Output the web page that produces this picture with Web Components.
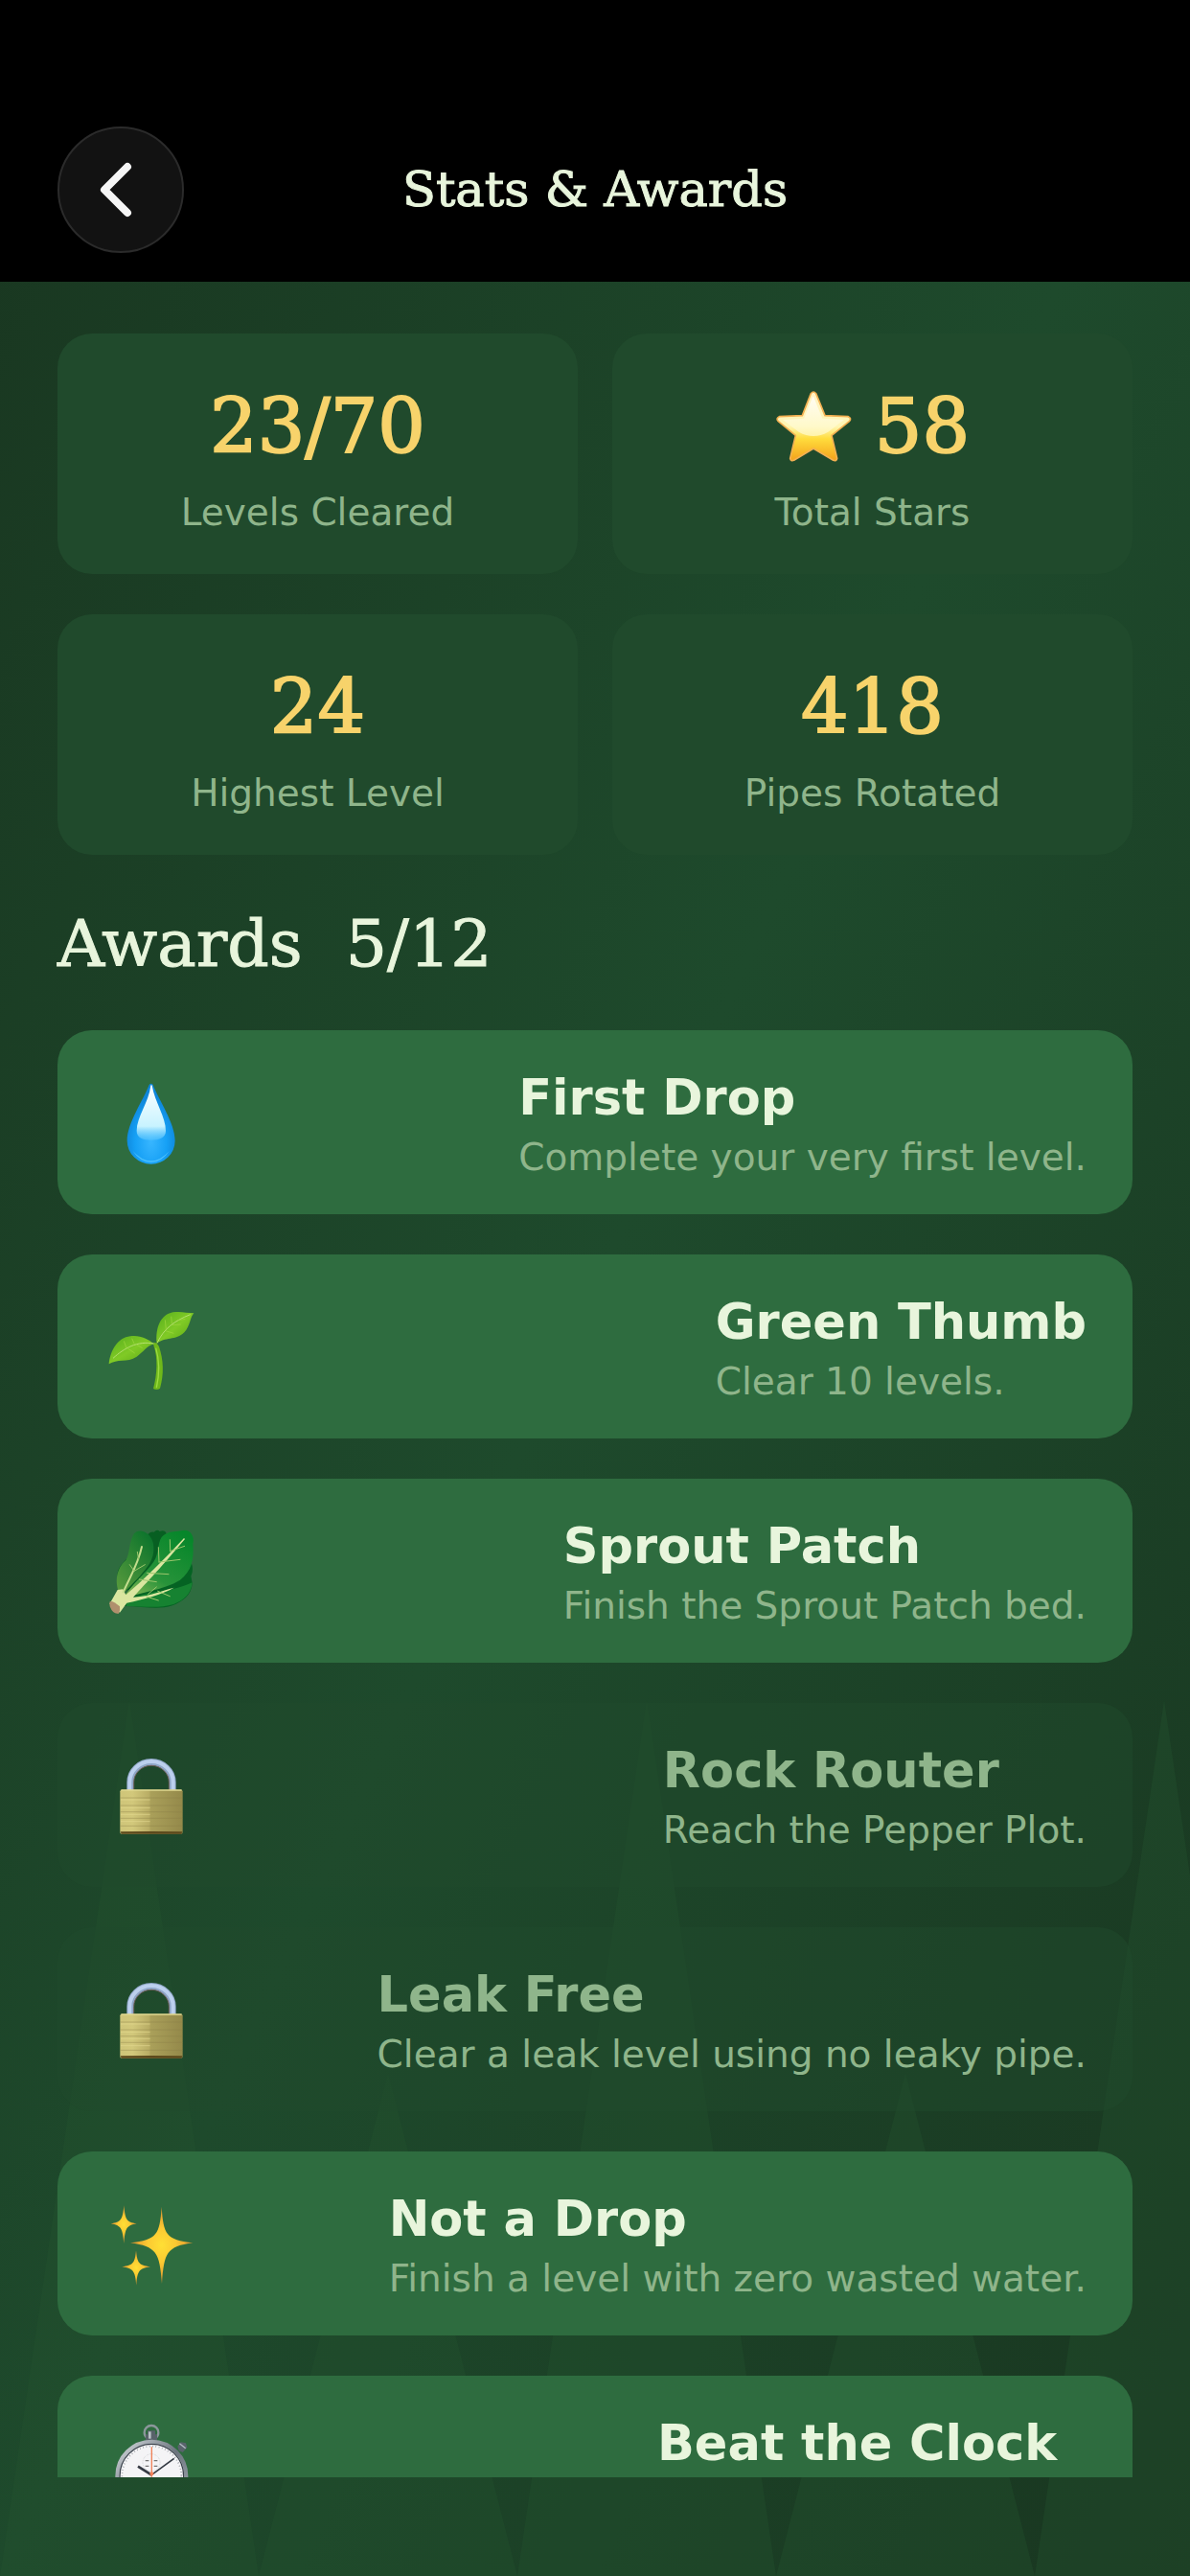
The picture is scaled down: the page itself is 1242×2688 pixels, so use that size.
<!DOCTYPE html>
<html lang="en">
<head>
<meta charset="utf-8">
<meta name="viewport" content="width=device-width, initial-scale=1">
<title>Stats &amp; Awards</title>
<style>
html, body {
    margin: 0;
    background: #000000;
}
body {
    --cream: #e8f5dc;
    --muted: #8fb58b;
    --gold: #f7d36b;
    --leaf: #2e6c3f;
    --moss: #204a2c;
    --serif: "DejaVu Serif", serif;
    font-family: "DejaVu Sans", Verdana, sans-serif;
    color: var(--cream);
}
.timed {
    --text-width: 448px;
}
</style>
</head>
<body>
<stats-screen>
    <top-bar slot="header">Stats &amp; Awards</top-bar>
    <stat-grid>
        <stat-card label="Levels Cleared">23/70</stat-card>
        <stat-card label="Total Stars"><game-icon slot="icon" name="star"></game-icon>58</stat-card>
        <stat-card label="Highest Level">24</stat-card>
        <stat-card label="Pipes Rotated">418</stat-card>
    </stat-grid>
    <award-list heading="Awards" count="5/12">
        <award-row icon="drop">First Drop<span slot="detail">Complete your very first level.</span></award-row>
        <award-row icon="seedling">Green Thumb<span slot="detail">Clear 10 levels.</span></award-row>
        <award-row icon="greens">Sprout Patch<span slot="detail">Finish the Sprout Patch bed.</span></award-row>
        <award-row icon="lock" locked>Rock Router<span slot="detail">Reach the Pepper Plot.</span></award-row>
        <award-row icon="lock" locked>Leak Free<span slot="detail">Clear a leak level using no leaky pipe.</span></award-row>
        <award-row icon="sparkles">Not a Drop<span slot="detail">Finish a level with zero wasted water.</span></award-row>
        <award-row icon="stopwatch" class="timed">Beat the Clock</award-row>
    </award-list>
</stats-screen>

<script>
const icons = {
    star: `<svg viewBox="68 46 240 228" width="80" height="76">
        <defs>
            <linearGradient id="s" x1="0" y1="0" x2="0" y2="1">
                <stop offset="0" stop-color="#fff3c4"/><stop offset=".5" stop-color="#fff6b4"/>
                <stop offset=".68" stop-color="#ffdc3c"/><stop offset="1" stop-color="#f4a21c"/>
            </linearGradient>
            <linearGradient id="g" x1="0" y1="0" x2="0" y2="1">
                <stop offset="0" stop-color="#ffffff"/><stop offset="1" stop-color="#fff8c0"/>
            </linearGradient>
        </defs>
        <path d="M180 57q8-10 16 0l28 69 73 3q11 5 4 14l-56 45 17 72q-2 10-12 6l-62-37-61 37q-10 4-12-6l17-72-55-45q-7-9 4-14l72-3z" fill="url(#s)" stroke="#f3b052" stroke-width="5" stroke-linejoin="round"/>
        <path d="M186 66l2 0 28 69 68 4-50 38q-46 26-92 0l-50-38 66-4z" fill="url(#g)" opacity=".8"/>
    </svg>`,
    drop: `<svg viewBox="0 3 420 360" width="140" height="120">
        <defs>
            <radialGradient id="d" cx=".5" cy=".72" r=".55">
                <stop offset="0" stop-color="#38b6ff"/><stop offset=".6" stop-color="#16a0f5"/>
                <stop offset="1" stop-color="#0e86da"/>
            </radialGradient>
            <linearGradient id="h" x1="0" y1="0" x2="0" y2="1">
                <stop offset="0" stop-color="#ffffff"/><stop offset=".75" stop-color="#c8f3ff"/>
                <stop offset="1" stop-color="#5cc8ff" stop-opacity=".5"/>
            </linearGradient>
        </defs>
        <path d="M197 66q6-7 12 0c18 48 69 119 69 175a75 73 0 0 1-150 0c0-56 51-127 69-175z" fill="url(#d)"/>
        <path d="M202 68c-6 52-44 98-44 142 0 22 18 29 45 29s46-7 46-29c0-44-34-90-43-142q-2-4-4 0z" fill="url(#h)"/>
        <path d="M145 272q58 64 116 0-24 36-58 36t-58-36z" fill="#62cfff" opacity=".7"/>
    </svg>`,
    seedling: `<svg viewBox="0 15 420 360" width="140" height="120">
        <defs>
            <linearGradient id="l" x1="0" y1="0" x2="1" y2="1">
                <stop offset="0" stop-color="#55ad1c"/><stop offset=".5" stop-color="#80ca26"/>
                <stop offset="1" stop-color="#58a512"/>
            </linearGradient>
        </defs>
        <path d="M212 182q12 2 16 14c14 42 16 86 3 130q-10 8-21 1c12-46 15-96 1-136z" fill="#6fb81a"/>
        <path d="M218 200c13 44 11 84 2 124" fill="none" stroke="#9bdc40" stroke-width="4"/>
        <path d="M71 250c4-42 28-83 67-87 32-4 54 9 75 24-25 7-32 24-55 40-30 20-62 5-87 23z" fill="url(#l)"/>
        <path d="M221 186c-5-49 11-90 50-98 25-4 44 2 66 3-12 12-11 40-30 60-26 27-62 13-86 35z" fill="url(#l)"/>
        <path d="M84 232c35-32 75-55 128-46M222 184c22-46 54-69 104-89" fill="none" stroke="#b5e070" stroke-width="3"/>
        <path d="M126 200l-8-22M151 188l-8-18M130 201l22 15M158 190l18 10M250 142l-3-30M268 123l-2-22M248 146l26 8M268 128l28-2M288 113l22-4" fill="none" stroke="#a0d840" stroke-width="2"/>
    </svg>`,
    greens: `<svg viewBox="0 27 420 360" width="140" height="120">
        <defs>
            <linearGradient id="v" x1=".8" y1="0" x2=".1" y2="1">
                <stop offset="0" stop-color="#06862a"/><stop offset=".6" stop-color="#28933a"/>
                <stop offset="1" stop-color="#8fba57"/>
            </linearGradient>
            <linearGradient id="w" x1=".8" y1="0" x2=".1" y2="1">
                <stop offset="0" stop-color="#0c742c"/><stop offset="1" stop-color="#5a9b3d"/>
            </linearGradient>
        </defs>
        <path d="M190 98q8-14 22-12 10-10 18-2 14-6 20 4l4 34-30 80-70 60-44 10q-26-52 0-84l28-32z" fill="#075f22"/>
        <path d="M110 290c60-50 150-30 218-110q10 22 0 44l4 22c-2 38-32 58-62 70-50 16-96 0-160 2z" fill="#056323"/>
        <path d="M108 290c-22-46-14-90 16-116 14-24 8-54 26-84 22-20 54 2 60 32 6 40-10 64-34 92-22 28-50 50-68 76z" fill="url(#w)"/>
        <path d="M110 300c34-52 78-86 102-122 16-24 10-54 24-76 18-22 46-16 70-22 22-2 34 22 28 44 4 48-4 84-40 112-54 34-118 32-184 64z" fill="url(#v)"/>
        <path d="M126 306c54-40 130-26 206-62-4 38-28 56-58 68-46 14-92 6-148 6z" fill="#168231"/>
        <path d="M73 311l25-44 17-2 9 18q84-72 182-178l3 3c-70 84-118 134-162 182 62-4 96-24 128-30-40 22-92 36-148 48l-22 30z" fill="#dbe6a0"/>
        <path d="M116 274c22-50 46-86 58-142" fill="none" stroke="#c3dc8c" stroke-width="6" stroke-linecap="round"/>
        <path d="M150 208l-14-20M164 172l-4-24M150 208l34-20M228 180l-2-46M263 146l-1-36M228 180l66-8M262 146l46-16M190 214l68 4M166 234l54 8M194 280l26-22M224 271l38 16M188 288l38 12" fill="none" stroke="#9cc66c" stroke-width="3" stroke-linecap="round"/>
        <path d="M73 305q6-8 32 14 2 14-3 22-18 4-28-22z" fill="#b08f6d"/>
    </svg>`,
    lock: `<svg viewBox="0 9 420 360" width="140" height="120">
        <defs>
            <linearGradient id="b">
                <stop offset="0" stop-color="#cfc579"/><stop offset=".2" stop-color="#d2c87b"/>
                <stop offset=".46" stop-color="#b9ad65"/><stop offset=".49" stop-color="#aaa05a"/>
                <stop offset="1" stop-color="#94894a"/>
            </linearGradient>
        </defs>
        <path d="M138 176v-27a66 63 0 0 1 132 0v27" fill="none" stroke="#8fa6c6" stroke-width="22"/>
        <path d="M136 176v-27a68 65 0 0 1 136 0v27" fill="none" stroke="#bcd0ee" stroke-width="12"/>
        <path d="M149 174v-25a55 52 0 0 1 110 0v25" fill="none" stroke="#6e5f58" stroke-width="3"/>
        <rect x="106" y="173" width="196" height="138" rx="5" fill="url(#b)"/>
        <path d="M109 174h190" stroke="#e0d890" stroke-width="4"/>
        <path d="M107 198h194M107 222h194M107 242h194M107 262h194M107 286h194" stroke="#8d8148" stroke-width="2" opacity=".6"/>
        <path d="M108 204h92M108 229h92M108 250h92M108 272h92" stroke="#e4da91" stroke-width="3" opacity=".6"/>
        <path d="M107 304q98-2 194 0l-3 7h-188z" fill="#5c491c"/>
    </svg>`,
    sparkles: `<svg viewBox="0 3 420 360" width="140" height="120">
        <defs>
            <radialGradient id="k">
                <stop offset="0" stop-color="#ffdf35"/><stop offset=".45" stop-color="#fbc932"/>
                <stop offset="1" stop-color="#d98e2f"/>
            </radialGradient>
        </defs>
        <g fill="url(#k)">
            <path d="M236 68c6 88 14 103 98 113-82 12-90 30-97 128-7-98-17-116-99-128 83-10 92-25 98-113z"/>
            <path d="M118 64c4 45 8 52 40 57-32 6-36 14-40 62-4-48-9-56-41-62 32-5 37-12 41-57z"/>
            <path d="M156 205c4 40 8 46 45 51-36 6-41 13-44 58-4-45-9-52-45-58 36-5 40-11 44-51z"/>
        </g>
    </svg>`,
    stopwatch: `<svg viewBox="0 45 420 360" width="140" height="120">
        <defs>
            <linearGradient id="m" x1="0" y1="0" x2="1" y2="1">
                <stop offset="0" stop-color="#d8dde2"/><stop offset=".5" stop-color="#6a737c"/>
                <stop offset="1" stop-color="#aab2ba"/>
            </linearGradient>
        </defs>
        <circle cx="204" cy="115" r="22" fill="none" stroke="#8b979b" stroke-width="7"/>
        <path d="M192 109h24v12h6v20h-36v-20h6z" fill="#58626a"/>
        <path d="M195 112h8v22h-8z" fill="#b9c2c6"/>
        <path d="M286 158l10-13 16 3 4 14-14 15-12-5z" fill="#59636c"/>
        <path d="M292 149l19 15" stroke="#b2bcc3" stroke-width="4"/>
        <circle cx="205" cy="251" r="108" fill="#f4f4f6" stroke="url(#m)" stroke-width="12"/>
        <circle cx="205" cy="251" r="100" fill="none" stroke="#39414b" stroke-width="4"/>
        <circle cx="205" cy="251" r="93" fill="none" stroke="#8a8f96" stroke-width="5" stroke-dasharray="2 8"/>
        <circle cx="204" cy="209" r="27" fill="none" stroke="#b7babd" stroke-width="2" stroke-dasharray="2 3"/>
        <path d="M185 203h11M212 203h11M185 220h11M212 220h11" stroke="#777777" stroke-width="4"/>
        <path d="M162 221l43 27" stroke="#343a43" stroke-width="8"/>
        <path d="M205 247l70-51" stroke="#343a43" stroke-width="5"/>
        <path d="M205 160v94" stroke="#ef8159" stroke-width="4"/>
        <circle cx="205" cy="244" r="6" fill="#ef8159"/>
    </svg>`
};

class BaseElement extends HTMLElement {
    constructor() {
        super();
        this.attachShadow({mode: "open"});
    }
    connectedCallback() {
        let t = document.createElement("template");
        t.innerHTML = this.template();
        this.shadowRoot.replaceChildren(t.content.cloneNode(true));
    }
}

class GameIcon extends BaseElement {
    template() {
        return `
<style>
:host { display: block; flex: none; }
svg { display: block; }
</style>
${icons[this.getAttribute("name")]}`;
    }
}
customElements.define("game-icon", GameIcon);

// gradient with a row of hedge spikes standing on the bottom edge
class GardenBackdrop extends BaseElement {
    template() {
        return `
<style>
:host {
    display: flex;
    align-items: flex-end;
    background: linear-gradient(to bottom right, #193620, #1e4a2c 50%, #193620);
}
svg {
    display: block;
    width: 100%;
    height: 34vh;
}
</style>
<svg viewBox="0 0 1242 913" preserveAspectRatio="none" aria-hidden="true">
    <path d="M0 913L135 0 270 913 405 389 540 913 675 0 810 913 945 389 1080 913 1215 0 1350 913z" fill="#245230" opacity=".36"/>
</svg>`;
    }
}
customElements.define("garden-backdrop", GardenBackdrop);

class StatsScreen extends BaseElement {
    template() {
        return `
<style>
:host {
    display: grid;
    grid-template: 100vh / minmax(0, 1fr);
}
garden-backdrop, #content {
    grid-area: 1 / 1;
}
#content {
    display: flex;
    flex-direction: column;
    min-height: 0;
    padding-bottom: 103px;
    box-sizing: border-box;
}
main {
    flex: 1;
    min-height: 0;
    overflow: hidden;
    padding: 54px 60px 0;
}
</style>
<garden-backdrop></garden-backdrop>
<div id="content">
    <slot name="header"></slot>
    <main><slot></slot></main>
</div>`;
    }
}
customElements.define("stats-screen", StatsScreen);

class TopBar extends BaseElement {
    template() {
        return `
<style>
:host {
    display: grid;
    grid-template-columns: 132px 1fr 132px;
    align-items: center;
    padding: 132px 60px 30px;
    background: #000000;
}
button {
    display: grid;
    place-items: center;
    width: 132px;
    height: 132px;
    padding: 0;
    border: 2px solid #2b2b2b;
    border-radius: 50%;
    background: #121212;
}
h1 {
    margin: 0;
    text-align: center;
    font: 51px/66px var(--serif);
    -webkit-text-stroke: 1px currentColor;
}
</style>
<button type="button" aria-label="Back">
    <svg width="60" height="66" viewBox="0 0 60 66"><path d="M37 9L13 33l24 24" fill="none" stroke="#f5f5f5" stroke-width="8" stroke-linecap="round" stroke-linejoin="round"/></svg>
</button>
<h1><slot></slot></h1>`;
    }
}
customElements.define("top-bar", TopBar);

class StatGrid extends BaseElement {
    template() {
        return `
<style>
:host {
    display: grid;
    grid-template-columns: 1fr 1fr;
    gap: 42px 36px;
}
</style>
<slot></slot>`;
    }
}
customElements.define("stat-grid", StatGrid);

class StatCard extends BaseElement {
    template() {
        return `
<style>
:host {
    display: flex;
    flex-direction: column;
    align-items: center;
    gap: 16px;
    padding: 47px 24px 40px;
    border-radius: 36px;
    background: var(--moss);
}
#value {
    display: flex;
    align-items: center;
    gap: 24px;
    font: 78px/100px var(--serif);
    color: var(--gold);
    -webkit-text-stroke: 2px currentColor;
}
#label {
    font-size: 39px;
    line-height: 48px;
    color: var(--muted);
}
</style>
<div id="value"><slot name="icon"></slot><span><slot></slot></span></div>
<div id="label">${this.getAttribute("label")}</div>`;
    }
}
customElements.define("stat-card", StatCard);

class AwardList extends BaseElement {
    template() {
        return `
<style>
:host {
    display: flex;
    flex-direction: column;
    gap: 42px;
}
h2 {
    display: flex;
    gap: 45px;
    margin: 53px 0 8px;
    font: 68px/80px var(--serif);
    -webkit-text-stroke: 1px currentColor;
}
</style>
<h2><span>${this.getAttribute("heading")}</span><span>${this.getAttribute("count")}</span></h2>
<slot></slot>`;
    }
}
customElements.define("award-list", AwardList);

class AwardRow extends BaseElement {
    template() {
        return `
<style>
:host {
    display: flex;
    flex: none;
    align-items: center;
    justify-content: space-between;
    min-height: 192px;
    padding: 0 48px 0 30px;
    box-sizing: border-box;
    border-radius: 36px;
    background: var(--leaf);
}
:host([locked]) {
    background: rgba(32, 74, 44, 0.5);
}
#text {
    display: flex;
    flex-direction: column;
    gap: 4px;
    min-width: var(--text-width, 0);
    padding-top: 6px;
}
#title {
    font-size: 51px;
    font-weight: bold;
    line-height: 64px;
}
:host([locked]) #title {
    color: var(--muted);
}
#detail {
    min-height: 52px;
    font-size: 39px;
    line-height: 52px;
    color: var(--muted);
}
</style>
<game-icon name="${this.getAttribute("icon")}"></game-icon>
<div id="text">
    <div id="title"><slot></slot></div>
    <div id="detail"><slot name="detail"></slot></div>
</div>`;
    }
}
customElements.define("award-row", AwardRow);
</script>
</body>
</html>
